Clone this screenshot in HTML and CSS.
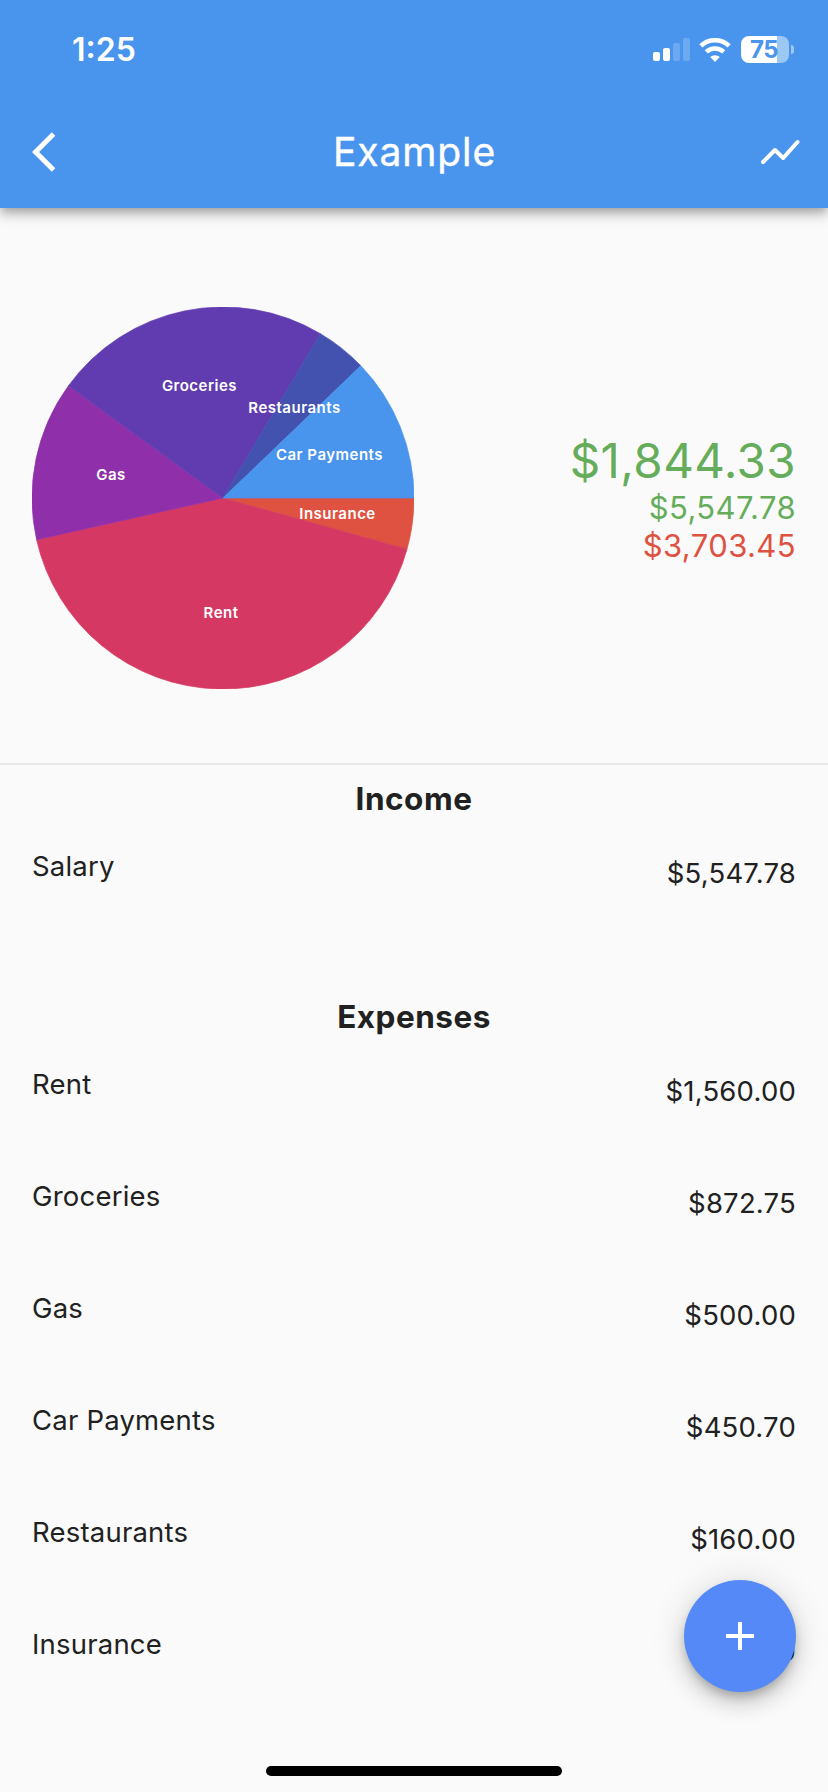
FILE: index.html
```html
<!DOCTYPE html>
<html lang="en">
<head>
<meta charset="utf-8">
<title>Example</title>
<link rel="stylesheet" href="styles.css">
</head>
<body>
<div class="screen">
  <header class="header">
    <div class="status">
      <span class="time">1:25</span>
      <div class="indicators">
        <svg class="signal" width="37" height="23" viewBox="0 0 37 23">
          <rect x="0" y="14" width="7" height="9" rx="2"/>
          <rect x="10" y="10" width="7" height="13" rx="2"/>
          <rect class="dim" x="20" y="5" width="7" height="18" rx="2"/>
          <rect class="dim" x="30" y="0" width="7" height="23" rx="2"/>
        </svg>
        <svg class="wifi" width="32" height="24" viewBox="0 0 32 24">
          <path d="M1.9 7.9A20.4 20.4 0 0 1 30.1 7.9" />
          <path d="M7.3 13.9A12.8 12.8 0 0 1 24.7 13.9" />
          <path class="dot" d="M11.2 19.1A7.2 7.2 0 0 1 20.8 19.1L16 24Z"/>
        </svg>
        <div class="battery"><div class="cell">75</div><i class="nub"></i></div>
      </div>
    </div>
    <nav class="appbar">
      <svg class="back" width="48" height="48" viewBox="0 0 24 24"><path d="M11.67 3.87 9.9 2.1 0 12l9.9 9.9 1.77-1.77L3.54 12z"/></svg>
      <h1 class="title">Example</h1>
      <svg class="trend" width="48" height="48" viewBox="0 0 48 48"><path d="M7 34 19 22 27.2 30 41.5 14"/></svg>
    </nav>
  </header>

  <section class="summary">
    <svg class="pie" width="382" height="382" viewBox="-191 -191 382 382">
      <path class="insurance" d="M0 0L191 0A191 191 0 0 1 184.01 51.21Z"/>
      <path class="rent" d="M0 0L184.01 51.21A191 191 0 0 1 -186.40 41.66Z"/>
      <path class="gas" d="M0 0L-186.40 41.66A191 191 0 0 1 -154.52 -112.28Z"/>
      <path class="groceries" d="M0 0L-154.52 -112.28A191 191 0 0 1 97.30 -164.36Z"/>
      <path class="restaurants" d="M0 0L97.30 -164.36A191 191 0 0 1 137.83 -132.22Z"/>
      <path class="car" d="M0 0L137.83 -132.22A191 191 0 0 1 191 0Z"/>
      <g class="labels">
        <text x="-23.5" y="-107">Groceries</text>
        <text x="71.5" y="-85">Restaurants</text>
        <text x="106.5" y="-38">Car Payments</text>
        <text x="-112" y="-18">Gas</text>
        <text x="114.5" y="21">Insurance</text>
        <text x="-2" y="120">Rent</text>
      </g>
    </svg>
    <div class="totals">
      <div class="net">$1,844.33</div>
      <div class="in">$5,547.78</div>
      <div class="out">$3,703.45</div>
    </div>
  </section>

  <section class="group">
    <h2>Income</h2>
    <div class="row"><span class="name">Salary</span><span class="amount">$5,547.78</span></div>
  </section>
  <section class="group">
    <h2>Expenses</h2>
    <div class="row"><span class="name">Rent</span><span class="amount">$1,560.00</span></div>
    <div class="row"><span class="name">Groceries</span><span class="amount">$872.75</span></div>
    <div class="row"><span class="name">Gas</span><span class="amount">$500.00</span></div>
    <div class="row"><span class="name">Car Payments</span><span class="amount">$450.70</span></div>
    <div class="row"><span class="name">Restaurants</span><span class="amount">$160.00</span></div>
    <div class="row"><span class="name">Insurance</span><span class="amount">$160.00</span></div>
  </section>

  <button class="fab" aria-label="Add"><svg width="48" height="48" viewBox="0 0 24 24"><path d="M19 13h-6v6h-2v-6H5v-2h6V5h2v6h6z"/></svg></button>
  <div class="home"></div>
</div>
</body>
</html>
```
FILE: styles.css
```css
* { box-sizing: border-box; }
body { margin: 0; font-family: Inter, "Liberation Sans", sans-serif; background: #fafafa; color: #212121; }
h1, h2 { margin: 0; }
svg { display: block; }
.screen { position: relative; width: 828px; height: 1792px; overflow: hidden; background: #fafafa; }
.header { position: relative; height: 208px; background: #4994ec; color: #fff;
  box-shadow: 0 4px 8px -2px rgba(0,0,0,.2), 0 8px 10px rgba(0,0,0,.14), 0 2px 20px rgba(0,0,0,.12); }
.status { display: flex; justify-content: space-between; height: 96px; padding: 0 34px 0 72px; }
.time { font-size: 32px; font-weight: 600; line-height: 100px; }
.indicators { display: flex; height: 99px; align-items: center; }
.signal { fill: #fff; margin-right: 9px; }
.signal .dim { fill: #6ba9f0; }
.wifi { fill: none; stroke: #fff; stroke-width: 4.6; margin-right: 10px; }
.wifi .dot { fill: #fff; stroke: none; }
.battery { display: flex; align-items: center; gap: 2px; }
.cell { width: 48px; height: 27px; border-radius: 8px; background: linear-gradient(90deg, #fff 36px, #9dc8f4 36px);
  color: #4994ec; font-size: 24px; font-weight: 700; line-height: 27px; letter-spacing: -.5px; padding-right: 2px; text-align: center; }
.nub { width: 3px; height: 9px; border-radius: 0 3px 3px 0; background: #9dc8f4; }
.appbar { display: grid; grid-template-columns: 1fr auto 1fr; align-items: center; height: 112px; padding: 0 24px 0 32px; }
.back { fill: #fff; }
.title { margin-right: 7px; font-size: 39px; font-weight: 400; line-height: 48px; letter-spacing: .9px; -webkit-text-stroke: .4px #fff; }
.trend { justify-self: end; fill: none; stroke: #fff; stroke-width: 4; stroke-linecap: round; stroke-linejoin: round; }
.summary { display: flex; align-items: center; justify-content: space-between; height: 557px; padding: 24px 32px 0; border-bottom: 2px solid #e8e8e8; }
.pie path { stroke-width: .7; }
.insurance { fill: #df5140; stroke: #df5140; }
.rent { fill: #d53963; stroke: #d53963; }
.gas { fill: #8f30aa; stroke: #8f30aa; }
.groceries { fill: #613cb0; stroke: #613cb0; }
.restaurants { fill: #4351af; stroke: #4351af; }
.car { fill: #4994ec; stroke: #4994ec; }
.labels { fill: #fff; font-size: 15px; font-weight: 600; letter-spacing: .5px; text-anchor: middle; }
.totals { padding-top: 2px; text-align: right; font-size: 31px; line-height: 38px; font-weight: 400; letter-spacing: .4px; }
.net { font-size: 47.5px; line-height: 57px; }
.net, .in { color: #66ad5b; }
.out { color: #df5140; }
.group { padding: 15px 32px 0; }
.group + .group { padding-top: 68px; }
.group h2 { font-size: 31.5px; font-weight: 700; line-height: 38px; letter-spacing: .5px; text-align: center; }
.row { display: flex; justify-content: space-between; height: 112px; font-size: 27.5px; font-weight: 400; line-height: 34px; letter-spacing: .2px; }
.name { padding-top: 31px; }
.amount { padding-top: 38px; }
.fab { position: absolute; right: 32px; bottom: 100px; width: 112px; height: 112px; padding: 0; border: 0; border-radius: 50%;
  display: grid; place-items: center; background: #5589f7; fill: #fff;
  box-shadow: 0 6px 10px -2px rgba(0,0,0,.2), 0 12px 20px rgba(0,0,0,.14), 0 2px 36px rgba(0,0,0,.12); }
.home { position: absolute; left: 266px; bottom: 16px; width: 296px; height: 10px; border-radius: 5px; background: #000; }
```
